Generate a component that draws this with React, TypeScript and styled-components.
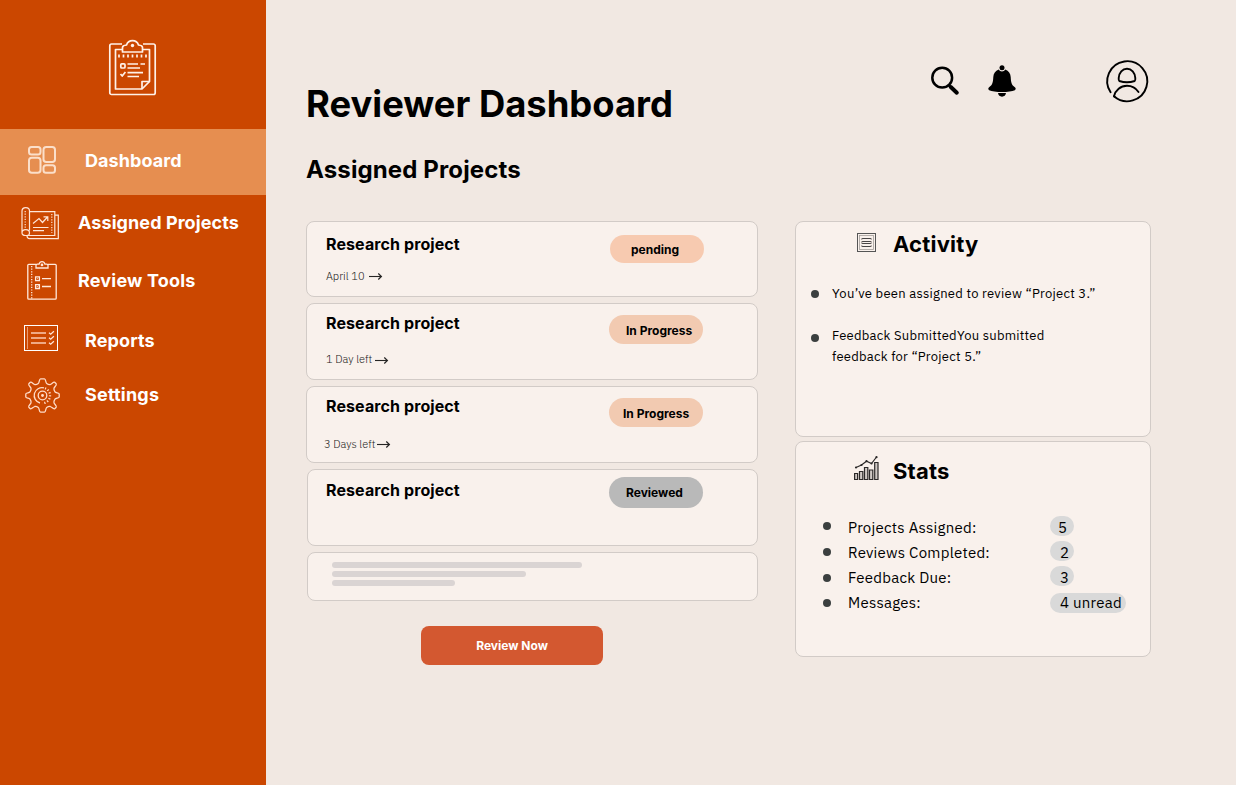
import React from "react";
import styled, { createGlobalStyle } from "styled-components";

const GlobalStyle = createGlobalStyle`
  * { box-sizing: border-box; }
  body { margin: 0; background: #f1e8e2; }
  h1, h2, h3, p, ul { margin: 0; padding: 0; }
  ul { list-style: none; }
  svg { display: block; flex: none; overflow: visible; }
`;

const heading = `"Inter", "Liberation Sans", sans-serif`;
const copy = `"IBM Plex Sans", "Roboto", "Liberation Sans", sans-serif`;

const Page = styled.div`
  display: flex;
  width: 1236px;
  height: 785px;
  overflow: hidden;
  background: #f1e8e2;
  color: #000;
  font-family: ${heading};
`;

const Sidebar = styled.aside`
  width: 266px;
  flex: none;
  background: #cb4700;
`;

const Brand = styled.div`
  height: 129px;
  padding: 40px 0 0 109px;
`;

const NavItem = styled.a<{ $height: number; $active?: boolean }>`
  display: flex;
  align-items: center;
  height: ${(p) => p.$height}px;
  background: ${(p) => (p.$active ? "#e68e50" : "transparent")};
  color: #fff;
`;

const NavIcon = styled.span<{ $width: number; $left: number; $lift?: number }>`
  width: ${(p) => p.$width}px;
  padding-left: ${(p) => p.$left}px;
  padding-bottom: ${(p) => p.$lift ?? 0}px;
  flex: none;
`;

const NavLabel = styled.span<{ $spacing?: number; $lift?: number }>`
  font-size: 18px;
  line-height: 22px;
  font-weight: 700;
  white-space: nowrap;
  letter-spacing: ${(p) => p.$spacing ?? 0}px;
  padding-bottom: ${(p) => p.$lift ?? 0}px;
`;

const Main = styled.main`
  flex: 1;
  padding: 60px 85px 0 40px;
`;

const Header = styled.header`
  display: flex;
  justify-content: space-between;
  height: 96px;
`;

const Title = styled.h1`
  font-size: 36.4px;
  line-height: 44px;
  font-weight: 700;
  padding-top: 22px;
  white-space: nowrap;
`;

const Actions = styled.div`
  display: flex;
  align-items: flex-start;
  padding-right: 3px;
`;

const SearchSlot = styled.span`
  padding: 6px 29px 0 0;
`;

const BellSlot = styled.span`
  padding: 5px 90px 0 0;
`;

const SectionTitle = styled.h2`
  height: 65px;
  font-size: 24px;
  line-height: 28px;
  font-weight: 700;
  letter-spacing: 0.12px;
`;

const Columns = styled.div`
  display: flex;
  justify-content: space-between;
  align-items: flex-start;
`;

const ProjectList = styled.section`
  display: flex;
  flex-direction: column;
  gap: 6px;
  width: 452px;
`;

const Card = styled.article<{ $height: number; $inset?: number }>`
  display: flex;
  justify-content: space-between;
  align-items: flex-start;
  height: ${(p) => p.$height}px;
  margin-left: ${(p) => p.$inset ?? 0}px;
  padding-right: 54px;
  border: 1px solid #d2cbc7;
  border-radius: 8px;
  background: #f9f1ec;
`;

const CardText = styled.div<{ $top: number; $left: number }>`
  padding: ${(p) => p.$top}px 0 0 ${(p) => p.$left}px;
`;

const CardTitle = styled.h3`
  font-size: 16px;
  line-height: 20px;
  font-weight: 700;
  letter-spacing: 0.1px;
  white-space: nowrap;
`;

const Due = styled.p<{ $gap: number; $outdent?: number }>`
  display: flex;
  align-items: center;
  margin: ${(p) => p.$gap}px 0 0 ${(p) => -(p.$outdent ?? 0)}px;
  font-family: ${copy};
  font-size: 11px;
  font-weight: 300;
  line-height: 14px;
  color: #1c1b1b;
  white-space: nowrap;
`;

const DueText = styled.span<{ $width: number; $spacing: number }>`
  width: ${(p) => p.$width}px;
  letter-spacing: ${(p) => p.$spacing}px;
`;

const ArrowSlot = styled.span<{ $drop: number }>`
  padding-top: ${(p) => p.$drop}px;
`;

const Pill = styled.span<{ $top: number; $height: number; $left: number; $tone: string; $drop?: number; $shift?: number }>`
  width: 94px;
  height: ${(p) => p.$height}px;
  margin: ${(p) => p.$top}px ${(p) => -(p.$shift ?? 0)}px 0 0;
  padding: ${(p) => p.$drop ?? 0}px 0 0 ${(p) => p.$left}px;
  border-radius: 16px;
  background: ${(p) => p.$tone};
  font-size: 12px;
  line-height: ${(p) => p.$height}px;
  font-weight: 700;
  white-space: nowrap;
`;

const Skeleton = styled.div`
  display: flex;
  flex-direction: column;
  gap: 3px;
  padding: 9px 0 0 24px;
`;

const Bar = styled.span<{ $width: number }>`
  width: ${(p) => p.$width}px;
  height: 6px;
  border-radius: 3px;
  background: #dad4d3;
`;

const ReviewButton = styled.button`
  width: 182px;
  height: 39px;
  margin: 19px 0 0 115px;
  padding: 0;
  border: 0;
  border-radius: 8px;
  background: #d35830;
  color: #fff;
  font: 700 12px/39px ${heading};
`;

const Side = styled.section`
  display: flex;
  flex-direction: column;
  gap: 4px;
  width: 356px;
`;

const Panel = styled.article`
  height: 216px;
  border: 1px solid #d2cbc7;
  border-radius: 8px;
  background: #f9f1ec;
`;

const PanelHead = styled.div<{ $left: number; $gap: number; $top: number; $height: number }>`
  display: flex;
  align-items: flex-start;
  gap: ${(p) => p.$gap}px;
  height: ${(p) => p.$height}px;
  padding: ${(p) => p.$top}px 0 0 ${(p) => p.$left}px;
`;

const PanelTitle = styled.h2<{ $top: number; $leading: number }>`
  padding-top: ${(p) => p.$top}px;
  font-size: 22px;
  line-height: ${(p) => p.$leading}px;
  font-weight: 700;
  letter-spacing: 0.2px;
`;

const Dot = styled.span<{ $top: number }>`
  width: 8px;
  height: 8px;
  flex: none;
  margin-top: ${(p) => p.$top}px;
  border-radius: 50%;
  background: #3b3f3f;
`;

const Feed = styled.ul`
  display: flex;
  flex-direction: column;
  gap: 21px;
  padding-left: 15px;
  font-family: ${copy};
  font-size: 13px;
  line-height: 21px;
`;

const FeedItem = styled.li`
  display: flex;
  gap: 13px;
`;

const FeedText = styled.p<{ $spacing: number }>`
  letter-spacing: ${(p) => p.$spacing}px;
  white-space: nowrap;
`;

const StatList = styled.ul`
  padding-left: 27px;
  font-family: ${copy};
  font-size: 15px;
  line-height: 25px;
`;

const StatRow = styled.li`
  display: flex;
  height: 25px;
`;

const StatName = styled.span<{ $spacing: number }>`
  width: 202px;
  margin-left: 17px;
  letter-spacing: ${(p) => p.$spacing}px;
  white-space: nowrap;
`;

const StatValue = styled.span<{ $width: number; $top: number; $left: number; $drop: number }>`
  width: ${(p) => p.$width}px;
  height: 20px;
  margin-top: ${(p) => p.$top}px;
  padding: ${(p) => p.$drop}px 0 0 ${(p) => p.$left}px;
  border-radius: 10px;
  background: #d9d9d9;
  line-height: 20px;
  letter-spacing: 0.25px;
  white-space: nowrap;
`;

const LogoIcon = () => (
  <svg width="47" height="56" viewBox="0 0 47 56" fill="none" stroke="#fff1e8" strokeWidth="1.7" strokeLinejoin="round">
    <path d="M13 4H2.500a1.700 1.700 0 0 0-1.700 1.700v47.100a1.700 1.700 0 0 0 1.700 1.700h42a1.700 1.700 0 0 0 1.700-1.700V5.700a1.700 1.700 0 0 0-1.700-1.700H34" />
    <path d="M13 9.500H6.500v39.500H33l7.500-7.500v-32H34" />
    <path d="M13.500 12V7.500c0-1.500 1.500-2.200 4-2.500 1-3 3.200-4.300 6-4.300s5 1.300 6 4.300c2.500.3 4 1 4 2.500V12Z" />
    <path d="M33 49v-7.500h7.500" />
    <circle cx="23.500" cy="5.500" r="1.700" fill="#fff1e8" stroke="none" />
    <path d="M10 14.500v3M14.500 14.500v3M19 14.500v3M23.500 14.500v3M28 14.500v3M32.500 14.500v3M37 14.500v3" />
    <rect x="11.800" y="23.800" width="4.200" height="4.200" rx="1" />
    <path d="M18.500 24h10.500M31.500 24H36M18.500 28h12.500M18.500 32.700H34M18.500 36.500H30M11.500 34l1.700 2 3.200-4" />
  </svg>
);

const DashboardIcon = () => (
  <svg width="28" height="28" viewBox="0 0 28 28" fill="none" stroke="#fbdfca" strokeWidth="2">
    <rect x="1" y="1" width="11.500" height="7.500" rx="2.500" />
    <rect x="1" y="11.800" width="11.500" height="15" rx="2.800" />
    <rect x="15.500" y="1" width="11.500" height="15" rx="2.800" />
    <rect x="15.500" y="19.300" width="11.500" height="7.500" rx="2.500" />
  </svg>
);

const BlueprintIcon = () => (
  <svg width="38" height="33" viewBox="0 0 38 33" fill="none" stroke="#ffe6d8" strokeWidth="1.200">
    <path d="M1 26V4c0-4.500 7.500-4.500 7.500 0v19.500M1 26c0-4.500 7.500-4.500 7.500 0 0 1.500-1 2.500-2.500 2.500H4.500C2.500 28.500 1 27.500 1 26Z" />
    <path d="M8.500 4.600h25.300v23.900H6M33.800 8.200h3.500v23.500H8.500c-1.500 0-2.500-1.200-2.500-3" />
    <path d="M30.800 7v19" strokeDasharray="1.200 1.400" />
    <path d="M4.200 4v19" strokeDasharray="1.200 1.400" />
    <path d="m12 16.500 6-5 3.500 4 5-5.500M22.500 9.800h4.300V14M12 20.500h15.500M12 23.700h11" />
  </svg>
);

const ToolsIcon = () => (
  <svg width="30" height="39" viewBox="0 0 30 39" fill="none" stroke="#ffe9dc" strokeWidth="1.300">
    <path d="M9 3.300H1.800a1 1 0 0 0-1 1v32.900a1 1 0 0 0 1 1h26.400a1 1 0 0 0 1-1V4.300a1 1 0 0 0-1-1H21" />
    <path d="M9 7V4.200c0-.7.500-1 1.200-1H12C12.500 1.500 13.500.7 15 .7s2.500.8 3 2.500h1.800c.7 0 1.200.3 1.200 1V7Z" />
    <circle cx="15" cy="3.900" r=".7" />
    <path d="M4.700 5v33" strokeDasharray="1.200 1.400" />
    <path d="M8.600 15.800h3.800v3.800H8.600zM8.600 23.700h3.800v3.800H8.600zM15 17.700h9M15 25.500h9" />
    <path d="M10 17.700h1M9.700 25l.7.800 1.300-1.400" strokeWidth=".8" />
  </svg>
);

const ReportsIcon = () => (
  <svg width="34" height="26" viewBox="0 0 34 26" fill="none">
    <rect x=".5" y=".5" width="33" height="25" stroke="#fff" />
    <path d="M3.500 2v22" stroke="#ec9c72" />
    <path d="M7 8h15M7 13h15M7 18h15" stroke="#efa985" strokeWidth="1.900" />
    <path d="m25 7.800 1.700 1.500 3.200-3M25 12.800l1.700 1.500 3.200-3M25 17.800l1.700 1.500 3.200-3" stroke="#ffe6d8" strokeWidth="1.200" />
  </svg>
);

const GearIcon = () => (
  <svg width="35" height="35" viewBox="0 0 35 35" fill="none" stroke="#ffdcc8" strokeWidth="1.300" strokeLinejoin="round">
    <path d="M15.500.8h4c1.300 0 1.100 3.900 2.200 4.700 1 .7 2.400 1.300 3.600 1 1.300-.4 3.200-3 4.400-2.200l1.500 1.500c.9 1.200-1.900 3.100-2.200 4.400-.3 1.200.3 2.600 1 3.600.8 1.100 4.200.9 4.200 2.200v3c0 1.300-3.400 1.100-4.200 2.200-.7 1-1.300 2.400-1 3.600.3 1.300 3.100 3.200 2.200 4.400l-1.500 1.500c-1.200.9-3.100-1.800-4.400-2.200-1.200-.3-2.600.3-3.600 1-1.100.8-.9 4.700-2.200 4.700h-4c-1.300 0-1.100-3.900-2.200-4.700-1-.7-2.400-1.300-3.600-1-1.300.4-3.200 3.100-4.400 2.200l-1.500-1.500c-.9-1.200 1.900-3.100 2.200-4.400.3-1.200-.3-2.600-1-3.600-.8-1.100-4.200-.9-4.200-2.200v-3c0-1.300 3.400-1.100 4.200-2.200.7-1 1.300-2.400 1-3.600C5.700 8.900 2.900 7 3.800 5.800l1.500-1.500c1.200-.8 3.100 1.800 4.400 2.200 1.200.3 2.600-.3 3.600-1C14.400 4.700 14.200.8 15.500.8Z" />
    <circle cx="17.500" cy="17.500" r="4.300" />
    <circle cx="17.500" cy="17.500" r=".8" fill="#ffdcc8" />
    <path d="M19 9.900A7.800 7.800 0 1 0 15 25" />
    <path d="M20 10.200A7.800 7.800 0 0 1 17.500 25.300" strokeWidth="2.200" strokeDasharray="1.200 1.800" />
  </svg>
);

const SearchIcon = () => (
  <svg width="28" height="29" viewBox="0 0 28 29" fill="none" stroke="#000">
    <circle cx="11.200" cy="11.700" r="9.900" strokeWidth="2.500" />
    <path d="m18 19.500 2 2" strokeWidth="2.500" />
    <path d="m19.800 21 6 5.700" strokeWidth="4" strokeLinecap="round" />
  </svg>
);

const BellIcon = () => (
  <svg width="28" height="32" viewBox="0 0 28 32">
    <circle cx="14" cy="2.800" r="2.500" />
    <path d="M10.700 4.600c.7 1.300 1.900 1.900 3.300 1.900s2.600-.6 3.300-1.900c3.400 1.200 5.200 4 5.400 7.400.3 5.600.8 8 4.200 10.200 1.100.8 1.100 2.200-.1 3-2.500 1.200-7.300 1.800-12.800 1.800S3.700 26.400 1.200 25.200c-1.200-.8-1.200-2.200-.1-3C4.500 20 5 17.600 5.300 12c.2-3.400 2-6.200 5.400-7.400Z" />
    <path d="M10 28.100h8c-.3 2.300-1.800 3.600-4 3.600s-3.700-1.300-4-3.600Z" />
  </svg>
);

const AvatarIcon = () => (
  <svg width="42" height="42" viewBox="0 0 42 42" fill="none" stroke="#000" strokeWidth="1.900" strokeLinecap="round" strokeLinejoin="round">
    <path d="M4.600 32.300A20 20 0 1 1 8 36.200c1.500-6.200 6.500-10.400 13-10.400 4.800 0 8.800 2.200 11.500 6.200" />
    <path d="M21 8.700c4.500 0 8 4 8.300 9.300.1 1.500 0 2.600-.6 3-4.400 1.500-11 1.500-15.400 0-.6-.4-.7-1.500-.6-3C13 12.700 16.500 8.700 21 8.700Z" />
    <path d="m8 36.200.6.500" />
  </svg>
);

const Arrow = () => (
  <svg width="13" height="7" viewBox="0 0 13 7" fill="none" stroke="#262524">
    <path d="M0 3.500h12" strokeWidth="1.100" />
    <path d="m9.300.5 3.100 3-3.100 3" strokeWidth="1.200" />
  </svg>
);

const ActivityIcon = () => (
  <svg width="19" height="19" viewBox="0 0 19 19" fill="none">
    <rect x=".5" y=".5" width="18" height="18" stroke="#555" />
    <rect x="2.500" y="2.500" width="14" height="14" stroke="#a39d9a" strokeWidth=".8" />
    <path d="M5 5.500h9M5 8.500h9M5 10.500h9M5 13.500h9" stroke="#494646" strokeWidth="1.200" />
    <path d="M4.800 5v2M14.200 5v2M4.800 8v3M14.200 8v3M4.800 12v2M14.200 12v2" stroke="#817b79" strokeWidth=".8" />
  </svg>
);

const StatsIcon = () => (
  <svg width="25" height="24" viewBox="0 0 25 24" fill="none" stroke="#2b2929">
    <path d="M.6 17.500h3v6h-3zM5.500 15.500h3.300v8H5.500zM10.500 11.500h3.300v12h-3.300zM15.500 14h3.300v9.500h-3.300zM20.700 6.500H24v17h-3.300z" strokeWidth="1.200" fill="#d0c9c5" />
    <path d="M2 11.500 7.500 9l5-3.800 5 2.300L22.500 1" strokeWidth="1.200" />
    <path d="M2 11.500h.01M7.500 9h.01M12.500 5.200h.01M17.500 7.500h.01M22.500 1.200h.01" strokeWidth="2.200" strokeLinecap="round" />
  </svg>
);

export default function App() {
  return (
    <>
      <GlobalStyle />
      <Page>
        <Sidebar>
          <Brand><LogoIcon /></Brand>
          <nav>
            <NavItem $height={66} $active>
              <NavIcon $width={85} $left={28} $lift={5}><DashboardIcon /></NavIcon>
              <NavLabel $lift={2} $spacing={0.07}>Dashboard</NavLabel>
            </NavItem>
            <NavItem $height={56}>
              <NavIcon $width={78} $left={21}><BlueprintIcon /></NavIcon>
              <NavLabel $spacing={0.08}>Assigned Projects</NavLabel>
            </NavItem>
            <NavItem $height={60}>
              <NavIcon $width={78} $left={27} $lift={2}><ToolsIcon /></NavIcon>
              <NavLabel $spacing={0.18}>Review Tools</NavLabel>
            </NavItem>
            <NavItem $height={60}>
              <NavIcon $width={85} $left={24} $lift={6}><ReportsIcon /></NavIcon>
              <NavLabel $spacing={0.12}>Reports</NavLabel>
            </NavItem>
            <NavItem $height={48}>
              <NavIcon $width={85} $left={25}><GearIcon /></NavIcon>
              <NavLabel $spacing={0.2}>Settings</NavLabel>
            </NavItem>
          </nav>
        </Sidebar>
        <Main>
          <Header>
            <Title>Reviewer Dashboard</Title>
            <Actions>
              <SearchSlot><SearchIcon /></SearchSlot>
              <BellSlot><BellIcon /></BellSlot>
              <AvatarIcon />
            </Actions>
          </Header>
          <SectionTitle>Assigned Projects</SectionTitle>
          <Columns>
            <ProjectList>
              <Card $height={76}>
                <CardText $top={12} $left={19}>
                  <CardTitle>Research project</CardTitle>
                  <Due $gap={15}>
                    <DueText $width={43} $spacing={0}>April 10</DueText>
                    <ArrowSlot $drop={0}><Arrow /></ArrowSlot>
                  </Due>
                </CardText>
                <Pill $top={13} $height={28} $left={21} $tone="#f7cab0" $drop={1} $shift={1}>pending</Pill>
              </Card>
              <Card $height={77}>
                <CardText $top={9} $left={19}>
                  <CardTitle>Research project</CardTitle>
                  <Due $gap={19}>
                    <DueText $width={49} $spacing={0}>1 Day left</DueText>
                    <ArrowSlot $drop={3}><Arrow /></ArrowSlot>
                  </Due>
                </CardText>
                <Pill $top={11} $height={29} $left={17} $tone="#f2cab1" $drop={1}>In Progress</Pill>
              </Card>
              <Card $height={77}>
                <CardText $top={9} $left={19}>
                  <CardTitle>Research project</CardTitle>
                  <Due $gap={21} $outdent={2}>
                    <DueText $width={53} $spacing={0}>3 Days left</DueText>
                    <ArrowSlot $drop={0}><Arrow /></ArrowSlot>
                  </Due>
                </CardText>
                <Pill $top={11} $height={29} $left={14} $tone="#f2cab1" $drop={1}>In Progress</Pill>
              </Card>
              <Card $height={77} $inset={1}>
                <CardText $top={10} $left={18}>
                  <CardTitle>Research project</CardTitle>
                </CardText>
                <Pill $top={7} $height={31} $left={17} $tone="#b9b9b9">Reviewed</Pill>
              </Card>
              <Card $height={49} $inset={1}>
                <Skeleton>
                  <Bar $width={250} />
                  <Bar $width={194} />
                  <Bar $width={123} />
                </Skeleton>
              </Card>
              <ReviewButton>Review Now</ReviewButton>
            </ProjectList>
            <Side>
              <Panel>
                <PanelHead $left={61} $gap={17} $top={11} $height={61}>
                  <ActivityIcon />
                  <PanelTitle $top={0} $leading={22}>Activity</PanelTitle>
                </PanelHead>
                <Feed>
                  <FeedItem>
                    <Dot $top={7} />
                    <FeedText $spacing={0.27}>You’ve been assigned to review “Project 3.”</FeedText>
                  </FeedItem>
                  <FeedItem>
                    <Dot $top={9} />
                    <FeedText $spacing={0.25}>
                      Feedback SubmittedYou submitted
                      <br />
                      feedback for “Project 5.”
                    </FeedText>
                  </FeedItem>
                </Feed>
              </Panel>
              <Panel>
                <PanelHead $left={58} $gap={14} $top={14} $height={73}>
                  <StatsIcon />
                  <PanelTitle $top={3} $leading={24}>Stats</PanelTitle>
                </PanelHead>
                <StatList>
                  <StatRow>
                    <Dot $top={7} />
                    <StatName $spacing={0.25}>Projects Assigned:</StatName>
                    <StatValue $width={24} $top={1} $left={8} $drop={2}>5</StatValue>
                  </StatRow>
                  <StatRow>
                    <Dot $top={8} />
                    <StatName $spacing={0.25}>Reviews Completed:</StatName>
                    <StatValue $width={24} $top={1} $left={10} $drop={2}>2</StatValue>
                  </StatRow>
                  <StatRow>
                    <Dot $top={9} />
                    <StatName $spacing={0.25}>Feedback Due:</StatName>
                    <StatValue $width={24} $top={1} $left={10} $drop={2}>3</StatValue>
                  </StatRow>
                  <StatRow>
                    <Dot $top={9} />
                    <StatName $spacing={0.25}>Messages:</StatName>
                    <StatValue $width={76} $top={3} $left={10} $drop={0}>4 unread</StatValue>
                  </StatRow>
                </StatList>
              </Panel>
            </Side>
          </Columns>
        </Main>
      </Page>
    </>
  );
}
